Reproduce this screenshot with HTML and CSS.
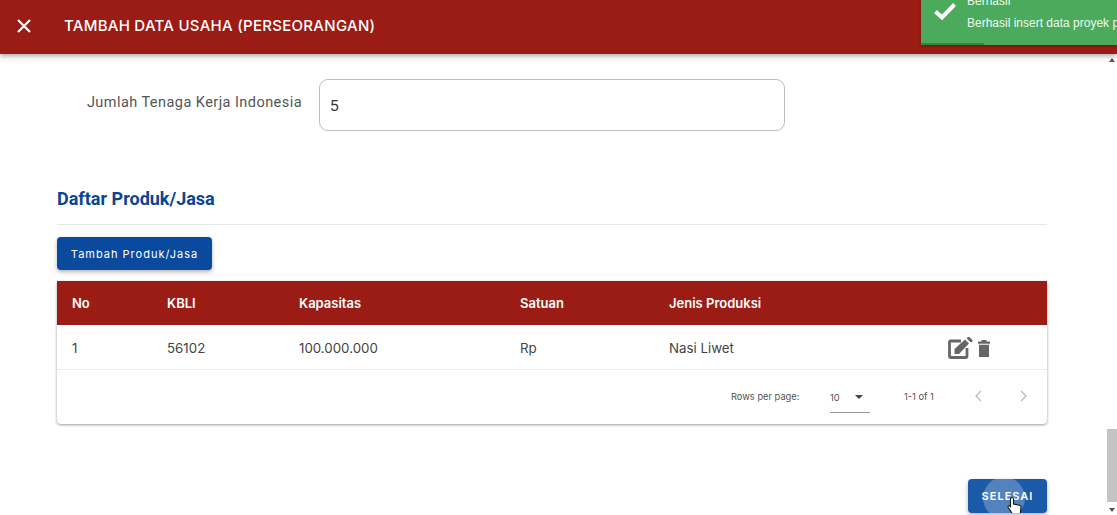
FILE: index.html
```html
<!DOCTYPE html>
<html lang="id">
<head>
<meta charset="utf-8">
<title>Tambah Data Usaha</title>
<link rel="stylesheet" href="styles.css">
</head>
<body>
<header class="appbar">
  <svg class="close-icon" viewBox="0 0 14 14" width="14" height="14"><path d="M1 1 13 13M13 1 1 13" stroke="#fff" stroke-width="2.2" fill="none"/></svg>
  <h1 class="appbar-title">TAMBAH DATA USAHA (PERSEORANGAN)</h1>
</header>
<div class="toast">
  <svg class="toast-check" viewBox="0 0 24 20" width="24" height="20"><path d="M2.5 10.5 9 16.5 21.5 3.5" stroke="#fff" stroke-width="4" fill="none"/></svg>
  <div class="toast-text">
    <div class="toast-title">Berhasil</div>
    <div class="toast-msg">Berhasil insert data proyek perseorangan</div>
  </div>
  <div class="toast-progress"></div>
</div>
<div class="viewport">
  <main class="content">
    <div class="field-row">
      <label class="field-label">Jumlah Tenaga Kerja Indonesia</label>
      <div class="field-input">5</div>
    </div>
    <h2 class="section-title">Daftar Produk/Jasa</h2>
    <button class="btn-add">Tambah Produk/Jasa</button>
    <div class="table-card">
      <div class="row row-head">
        <div>No</div><div>KBLI</div><div>Kapasitas</div><div>Satuan</div><div>Jenis Produksi</div><div></div>
      </div>
      <div class="row row-body">
        <div>1</div><div>56102</div><div>100.000.000</div><div>Rp</div><div>Nasi Liwet</div>
        <div class="actions">
          <svg viewBox="0 0 25 22" width="25" height="22"><path d="M13 4H2.500a1 1 0 0 0-1 1v14.500a1 1 0 0 0 1 1H18a1 1 0 0 0 1-1V11" fill="none" stroke="#666" stroke-width="2.800"/><path d="M6.500 12 17 2.500l4 4L11 17H6.500z" fill="#666"/><path d="M18.500 1.200 20 0a1 1 0 0 1 1.400 0l3 3a1 1 0 0 1 0 1.400L22.800 5.500z" fill="#666"/></svg>
          <svg viewBox="0 0 14 18" width="14" height="18"><path d="M1 2.500h12v2.200H1zM4.500 1h5v2h-5zM2 5.800h10V18H2z" fill="#666"/></svg>
        </div>
      </div>
      <div class="pager">
        <span class="pager-label">Rows per page:</span>
        <div class="pager-select"><span>10</span><i class="caret"></i></div>
        <span class="pager-count">1-1 of 1</span>
        <svg class="pager-arrow" viewBox="0 0 8 12" width="8" height="12"><path d="M7 1 2 6l5 5" fill="none" stroke="#bdbdbd" stroke-width="1.4"/></svg>
        <svg class="pager-arrow" viewBox="0 0 8 12" width="8" height="12"><path d="M1 1l5 5-5 5" fill="none" stroke="#bdbdbd" stroke-width="1.4"/></svg>
      </div>
    </div>
    <div class="footer-actions">
      <button class="btn-done">
        <span class="ripple"></span>
        <span class="btn-done-label">SELESAI</span>
        <svg class="cursor" viewBox="0 0 16 20" width="16" height="20"><path d="M5 1.500c1 0 1.500.6 1.500 1.500v5l6 1.200c1 .3 1.500 1 1.500 2l-.6 5.300c-.1 1-.9 2-2 2H7c-.8 0-1.400-.4-1.800-1L1.200 11.500c-.5-.9 0-1.600.7-1.700.6-.1 1.100.2 1.600.8V3c0-1 .5-1.500 1.500-1.500z" fill="#fff" stroke="#111" stroke-width="1.100"/></svg>
      </button>
    </div>
  </main>
  <aside class="scrollbar">
    <i class="scroll-up"></i>
    <div class="scroll-track"><div class="scroll-thumb"></div></div>
    <i class="scroll-down"></i>
  </aside>
</div>
</body>
</html>
```
FILE: styles.css
```css
* { box-sizing: border-box; }
html, body { margin: 0; height: 515px; overflow: hidden; background: #fff; }
body { font-family: Roboto, sans-serif; color: #444; display: flex; flex-direction: column; }

.appbar {
  height: 54px; flex: none; background: #9b1c14; display: flex; align-items: center;
  padding: 0 0 3px 17px; box-shadow: 0 2px 5px rgba(0,0,0,.35); position: relative; z-index: 2;
}
.close-icon { margin-right: 33px; }
.appbar-title { margin: 0; font: 500 15px Inter, sans-serif; color: #fff; letter-spacing: .27px; white-space: nowrap; }

.toast {
  position: absolute; z-index: 3; left: 921px; top: 0; width: 196px; height: 45px;
  background: #4caa5c; color: #eef8f0; overflow: hidden; display: flex; align-items: flex-start;
  padding-left: 12px; box-shadow: 0 1px 3px rgba(0,0,0,.3);
}
.toast-check { margin-top: 1px; flex: none; }
.toast-text { margin-left: 10px; font: 12px "Liberation Sans", sans-serif; white-space: nowrap; margin-top: -8px; }
.toast-title { line-height: 18px; }
.toast-msg { line-height: 18px; margin-top: 4px; }
.toast-progress { position: absolute; left: 0; bottom: 0; width: 63px; height: 2px; background: #2f8a41; }

.viewport { flex: 1; display: flex; min-height: 0; }
.content { flex: 1; padding: 25px 60px 0 57px; min-width: 0; }

.field-row { display: flex; align-items: center; height: 52px; }
.field-label { width: 245px; text-align: right; font-size: 14.5px; letter-spacing: .45px; color: #555; margin-top: -6px; }
.field-input {
  width: 466px; height: 52px; margin-left: 17px; border: 1px solid #bdbdbd; border-radius: 9px;
  padding: 0 10px; display: flex; align-items: center; font: 15px Inter, sans-serif; color: #333;
}

.section-title {
  margin: 56px 0 12px; padding-bottom: 13px; border-bottom: 1px solid #e6e6e6;
  font: 700 18px/24px Roboto, sans-serif; color: #0a4592;
}

.btn-add {
  display: block; width: 155px; height: 33px; border: 0; border-radius: 4px; background: #0a4a9e;
  color: #fff; font: 400 11px Inter, sans-serif; letter-spacing: 1px; padding: 0;
  box-shadow: 0 2px 4px rgba(0,0,0,.3);
}

.table-card { margin-top: 11px; border-radius: 0 0 4px 4px; box-shadow: 0 1px 3px rgba(0,0,0,.4); background: #fff; }
.row { display: grid; grid-template-columns: 95px 132px 221px 149px 1fr 99px; padding-left: 15px; align-items: center; font-family: Inter, sans-serif; }
.row-head { height: 44px; background: #9b1c14; color: #fff; font-size: 13px; font-weight: 600; }
.row-body { height: 45px; font-size: 13.3px; color: #444; border-bottom: 1px solid #eee; padding-top: 1px; }
.actions { display: flex; align-items: center; gap: 4px; height: 24px; }

.pager { height: 54px; display: flex; align-items: center; padding: 0 0 2px 674px; font-family: Inter, sans-serif; font-size: 9.300px; color: #555; }
.pager > * { flex: none; }
.pager-label { width: 99px; }
.pager-select { width: 40px; height: 30px; border-bottom: 1px solid #999; display: flex; align-items: center; justify-content: space-between; padding: 0 7px 0 0; margin-top: 3px; }
.caret { width: 0; height: 0; border: 4.500px solid transparent; border-top: 4.500px solid #444; border-bottom: 0; }
.pager-count { margin-left: 34px; width: 70px; }
.pager-arrow { margin-right: 38px; }
.pager-arrow:last-child { margin-right: 0; }

.footer-actions { display: flex; justify-content: flex-end; margin-top: 55px; }
.btn-done {
  position: relative; overflow: hidden; width: 79px; height: 34px; border: 0; border-radius: 4px; background: #1a5aa8;
  color: #fff; font: 600 11px Inter, sans-serif; letter-spacing: 1px; padding: 0; box-shadow: 0 2px 4px rgba(0,0,0,.3);
}
.btn-done-label { position: relative; }
.ripple { position: absolute; left: 15px; top: -2px; width: 42px; height: 42px; border-radius: 50%; background: rgba(255,255,255,.25); }
.cursor { position: absolute; left: 39px; top: 17px; }

.scrollbar { width: 10px; flex: none; display: flex; flex-direction: column; align-items: center; background: #fff; }
.scroll-up, .scroll-down { flex: none; width: 0; height: 0; border: 3px solid transparent; }
.scroll-up { border-bottom: 4px solid #555; border-top: 0; margin-top: 4px; }
.scroll-down { border-top: 4px solid #555; border-bottom: 0; margin-bottom: 3px; }
.scroll-track { flex: 1; width: 100%; padding-top: 367px; padding-bottom: 5px; }
.scroll-thumb { height: 73px; background: #c4c4c4; }
```
